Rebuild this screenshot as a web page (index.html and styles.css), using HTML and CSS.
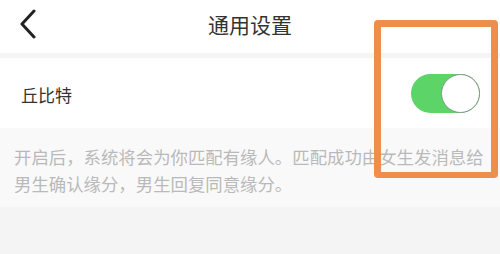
FILE: index.html
```html
<!DOCTYPE html>
<html lang="zh">
<head>
<meta charset="utf-8">
<link rel="stylesheet" href="styles.css">
</head>
<body>
<div class="page">
  <header class="header">
    <svg class="back" width="18" height="30" viewBox="0 0 18 30"><path d="M15 2 L3 15 L15 28" fill="none" stroke="#222" stroke-width="3" stroke-linecap="round" stroke-linejoin="round"/></svg>
    <h1 class="title">通用设置</h1>
  </header>
  <div class="gap"></div>
  <div class="row">
    <span class="label">丘比特</span>
    <div class="switch"><div class="knob"></div></div>
  </div>
  <p class="desc">开启后，系统将会为你匹配有缘人。匹配成功由女生发消息给男生确认缘分，男生回复同意缘分。</p>
  <div class="highlight"></div>
</div>
</body>
</html>
```
FILE: styles.css
```css
html, body {
  margin: 0;
  padding: 0;
  background: #f4f4f4;
  font-family: "Noto Sans CJK SC", "Noto Sans", sans-serif;
}
.page {
  position: relative;
  width: 500px;
  height: 254px;
  overflow: hidden;
}
.header {
  height: 53px;
  background: #fff;
  display: flex;
  align-items: center;
  justify-content: center;
  position: relative;
}
.back {
  position: absolute;
  left: 19px;
  top: 9px;
}
.title {
  margin: 0;
  font-size: 21px;
  font-weight: 400;
  color: #333;
  line-height: 1;
  margin-top: -4px;
}
.gap {
  height: 5px;
  background: #f5f5f5;
}
.row {
  height: 70px;
  background: #fff;
  display: flex;
  align-items: center;
  justify-content: space-between;
  padding: 0 20px 0 21px;
}
.label {
  font-size: 17px;
  color: #333;
  margin-top: 2px;
}
.switch {
  width: 69px;
  height: 39px;
  border-radius: 20px;
  background: #5dd467;
  position: relative;
  margin-top: 1px;
}
.knob {
  position: absolute;
  right: 0;
  top: 0;
  width: 37px;
  height: 37px;
  border-radius: 50%;
  background: #fff;
  border: 1px solid #84968a;
}
.desc {
  margin: 0;
  background: #f9f9f9;
  padding: 15px 10px 10px 14px;
  font-size: 17.4px;
  line-height: 27px;
  color: #b9b9b9;
  height: 54px;
}
.highlight {
  position: absolute;
  left: 374px;
  top: 20px;
  width: 124px;
  height: 158px;
  box-sizing: border-box;
  border: 7px solid #ef8d4b;
  border-bottom-width: 6px;
  border-radius: 4px;
}
```
